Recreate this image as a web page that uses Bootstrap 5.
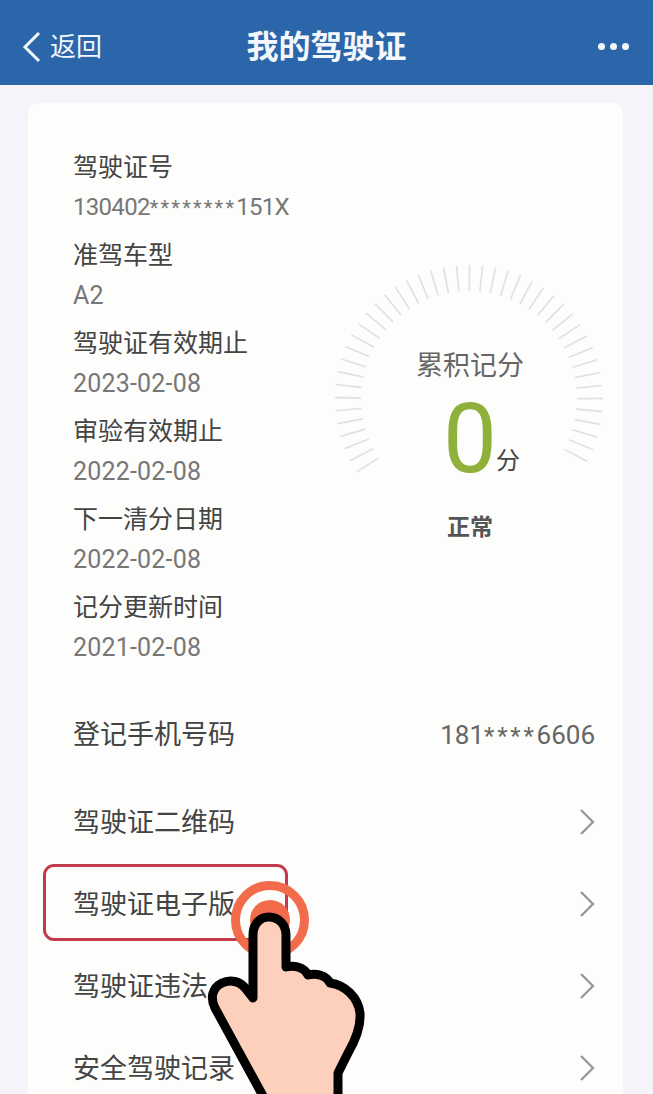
<!DOCTYPE html>
<html lang="zh-CN">
<head>
  <meta charset="UTF-8" />
  <title>我的驾驶证</title>
  <meta name="viewport" content="width=device-width, initial-scale=1.0" />
  <link href="https://cdn.jsdelivr.net/npm/bootstrap@5.3.3/dist/css/bootstrap.min.css" rel="stylesheet" />
  <style>
    html, body { height: 1094px; overflow: hidden; }
    body {
      background: #f4f4fa;
      font-family: "Roboto", "Noto Sans CJK SC", sans-serif;
      color: #444;
    }
    .app-frame { position: relative; height: 1094px; overflow: hidden; }
    .top-bar {
      height: 85px;
      background: #2b65aa;
      color: #f4f7fb;
      padding: 8px 24px 0 22px;
    }
    .back-link { font-size: 26px; width: 120px; line-height: 1; }
    .top-title { font-size: 32px; font-weight: 700; line-height: 1; margin-left: 2px; }
    .more-dots { width: 120px; }
    .more-dots i { width: 7px; height: 7px; border-radius: 50%; background: #f4f7fb; margin-left: 5px; }
    .licence-panel {
      margin: 18px 30px 0 28px;
      padding: 44px 28px 0 45px;
      background: #fdfdfc;
      border-radius: 10px 10px 0 0;
      height: 1000px;
    }
    .info-item { height: 88px; }
    .info-label { font-size: 25px; line-height: 41px; color: #444; }
    .info-value { font-size: 25px; line-height: 39px; color: #777; letter-spacing: .2px; }
    .id-value { font-size: 24px; letter-spacing: -.7px; }
    .star-run { font-size: 20px; letter-spacing: 2.2px; }
    .gauge-box {
      position: relative;
      width: 280px;
      height: 300px;
      margin: 120px -18px 0 0;
      padding: 79px 6px 0 0;
      text-align: center;
      flex-shrink: 0;
    }
    .gauge-ticks { position: absolute; left: 0; top: 0; overflow: visible; }
    .gauge-title { font-size: 27px; line-height: 40px; color: #666; }
    .gauge-num { font-size: 96px; line-height: 100px; color: #8fb03a; height: 100px; margin-top: 3px; }
    .gauge-unit { font-size: 24px; color: #444; position: absolute; left: 163px; top: 179px; line-height: 30px; }
    .gauge-state { font-size: 23px; font-weight: 700; color: #555; line-height: 30px; margin-top: 24px; }
    .list-row { height: 82px; font-size: 27px; color: #444; position: relative; }
    .row-phone { height: 88px; margin-top: 16px; margin-bottom: 3px; }
    .phone-num { color: #666; font-size: 26px; }
    .phone-num .star-run { font-size: 24px; letter-spacing: 2.8px; }
    .row-arrow { margin-top: -2px; }
    .red-box {
      position: absolute;
      left: -30px; top: 0;
      width: 245px; height: 77px;
      border: 3px solid #c23a4c;
      border-radius: 11px;
    }
    .touch-hand { position: absolute; left: 0; top: 0; pointer-events: none; }
  </style>
</head>
<body>
  <div class="app-frame">
    <div class="top-bar d-flex align-items-center justify-content-between">
      <div class="back-link d-flex align-items-center gap-2">
        <svg width="20" height="32" viewBox="0 0 20 32"><path d="M17 2 3 16l14 14" fill="none" stroke="#f4f7fb" stroke-width="3" /></svg>
        <span>返回</span>
      </div>
      <div class="top-title">我的驾驶证</div>
      <div class="more-dots d-flex justify-content-end"><i></i><i></i><i></i></div>
    </div>

    <div class="licence-panel">
      <div class="d-flex justify-content-between">
        <div>
          <div class="info-item"><div class="info-label">驾驶证号</div><div class="info-value id-value">130402<span class="star-run">********</span>151X</div></div>
          <div class="info-item"><div class="info-label">准驾车型</div><div class="info-value">A2</div></div>
          <div class="info-item"><div class="info-label">驾驶证有效期止</div><div class="info-value">2023-02-08</div></div>
          <div class="info-item"><div class="info-label">审验有效期止</div><div class="info-value">2022-02-08</div></div>
          <div class="info-item"><div class="info-label">下一清分日期</div><div class="info-value">2022-02-08</div></div>
          <div class="info-item"><div class="info-label">记分更新时间</div><div class="info-value">2021-02-08</div></div>
        </div>
        <div class="gauge-box">
          <svg class="gauge-ticks" id="gaugeTicks" width="280" height="300" viewBox="0 0 280 300"></svg>
          <div class="gauge-title position-relative">累积记分</div>
          <div class="gauge-num">0</div>
          <div class="gauge-unit">分</div>
          <div class="gauge-state position-relative">正常</div>
        </div>
      </div>

      <div class="list-row row-phone d-flex align-items-center justify-content-between">
        <span>登记手机号码</span><span class="phone-num">181<span class="star-run">****</span>6606</span>
      </div>
      <div class="list-row d-flex align-items-center justify-content-between">
        <span>驾驶证二维码</span><svg class="row-arrow" width="16" height="26" viewBox="0 0 16 26"><path d="M2 1l12 12L2 25" fill="none" stroke="#999" stroke-width="2.4" /></svg>
      </div>
      <div class="list-row d-flex align-items-center justify-content-between">
        <span>驾驶证电子版</span><svg class="row-arrow" width="16" height="26" viewBox="0 0 16 26"><path d="M2 1l12 12L2 25" fill="none" stroke="#999" stroke-width="2.4" /></svg>
        <div class="red-box"></div>
      </div>
      <div class="list-row d-flex align-items-center justify-content-between">
        <span>驾驶证违法</span><svg class="row-arrow" width="16" height="26" viewBox="0 0 16 26"><path d="M2 1l12 12L2 25" fill="none" stroke="#999" stroke-width="2.4" /></svg>
      </div>
      <div class="list-row d-flex align-items-center justify-content-between">
        <span>安全驾驶记录</span><svg class="row-arrow" width="16" height="26" viewBox="0 0 16 26"><path d="M2 1l12 12L2 25" fill="none" stroke="#999" stroke-width="2.4" /></svg>
      </div>
    </div>

    <!-- tap hint drawn over the list -->
    <svg class="touch-hand" width="653" height="1094" viewBox="0 0 653 1094">
      <circle cx="270" cy="920" r="34.5" fill="none" stroke="#f26b4a" stroke-width="9" />
      <circle cx="270" cy="920" r="20" fill="#f26b4a" />
      <path d="M263 1096 215 1008c-5-10-3-20 7-25 8-4 18-2 24 6l7 9V935c0-11 7-18 16-18s17 7 17 18v32c8-2 18 0 22 8 8-2 18 0 22 8 15 2 28 14 30 30 1 14-5 28-12 40l-10 20v25" fill="#fdd0bb" stroke="#000" stroke-width="9" stroke-linejoin="round" />
    </svg>
  </div>

  <script src="https://cdn.jsdelivr.net/npm/bootstrap@5.3.3/dist/js/bootstrap.bundle.min.js"></script>
  <script>
    // gauge ticks, centre sits at page (470,402)
    const svg = document.getElementById("gaugeTicks");
    const cx = 136, cy = 132;
    let lines = "";
    for (let a = -123; a <= 123; a += 5.6) {
      const r = a * Math.PI / 180;
      const s = Math.sin(r), c = Math.cos(r);
      lines += `<line x1="${cx + 108 * s}" y1="${cy - 108 * c}" x2="${cx + 134 * s}" y2="${cy - 134 * c}" stroke="#e0e0e0" stroke-width="1.6" />`;
    }
    svg.innerHTML = lines;
  </script>
</body>
</html>
